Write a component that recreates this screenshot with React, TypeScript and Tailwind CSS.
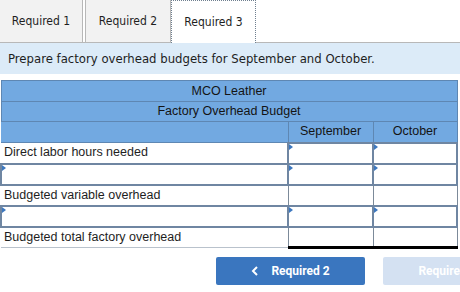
import React from 'react';

const Flag = () => (
  <span className="absolute left-0 top-0 h-0 w-0 border-l-[4px] border-y-[3px] border-l-[#3d78bf] border-y-transparent" />
);

const InputCell = () => (
  <td className="relative h-[21px] border-2 border-[#6f86a2] bg-white p-0">
    <Flag />
  </td>
);

const LabelCell = ({ text }: { text: string }) => (
  <td className="h-[21px] border-y border-[#b9c2cc] bg-white pl-[3px] text-left align-middle">{text}</td>
);

const TotalCell = ({ last = false }: { last?: boolean }) => (
  <td
    className={`h-[21px] border-x border-[#7c8a99] border-t-2 border-t-[#1a1a1a] bg-white p-0 ${
      last ? 'border-b-[3px] border-b-black' : 'border-b border-b-[#7c8a99]'
    }`}
  />
);

export default function App() {
  return (
    <div className="h-[292px] w-[460px] overflow-hidden bg-white text-[#1e1e1e]">
      {/* tabs */}
      <div
        className="flex h-[43px] text-[12px]"
        style={{ fontFamily: '"DejaVu Sans Condensed", "DejaVu Sans", Verdana, sans-serif' }}
      >
        <div className="flex w-[83px] items-center justify-center border-r border-b border-[#b8b8b8] bg-[#f2f2f2]">Required 1</div>
        <div className="w-[2px] border-b border-[#b8b8b8]" />
        <div className="flex w-[86px] items-center justify-center border-x border-b border-[#b8b8b8] bg-[#f2f2f2]">Required 2</div>
        <div className="flex w-[85px] items-center justify-center border-x border-t border-dotted border-[#6f7f8f] bg-white">Required 3</div>
        <div className="flex-1 border-b border-[#b8b8b8]" />
      </div>

      {/* instructions */}
      <div
        className="flex h-[31px] items-center bg-[#dcebf8] pl-[8px] text-[13px] text-[#1e1e1e]"
        style={{ fontFamily: '"DejaVu Sans Condensed", "DejaVu Sans", Verdana, sans-serif' }}
      >
        Prepare factory overhead budgets for September and October.
      </div>

      {/* table */}
      <table
        className="mt-[6px] w-[456px] table-fixed border-collapse text-[12.5px]"
        style={{ fontFamily: '"Liberation Sans", Arial, sans-serif' }}
      >
        <colgroup>
          <col className="w-[287px]" />
          <col className="w-[85px]" />
          <col className="w-[84px]" />
        </colgroup>
        <tbody>
          <tr>
            <td colSpan={3} className="h-[21px] border border-[#5e87b3] bg-[#72a9e1] text-center text-[#141414]">
              MCO Leather
            </td>
          </tr>
          <tr>
            <td colSpan={3} className="h-[20px] border border-[#5e87b3] bg-[#72a9e1] text-center text-[#141414]">
              Factory Overhead Budget
            </td>
          </tr>
          <tr>
            <td className="h-[21px] border-y border-[#5e87b3] bg-[#72a9e1]" />
            <td className="h-[21px] border border-[#5e87b3] bg-[#72a9e1] text-center text-[#141414]">September</td>
            <td className="h-[21px] border border-[#5e87b3] bg-[#72a9e1] text-center text-[#141414]">October</td>
          </tr>
          <tr>
            <LabelCell text="Direct labor hours needed" />
            <InputCell />
            <InputCell />
          </tr>
          <tr>
            <InputCell />
            <InputCell />
            <InputCell />
          </tr>
          <tr>
            <LabelCell text="Budgeted variable overhead" />
            <TotalCell />
            <TotalCell />
          </tr>
          <tr>
            <InputCell />
            <InputCell />
            <InputCell />
          </tr>
          <tr>
            <LabelCell text="Budgeted total factory overhead" />
            <TotalCell last />
            <TotalCell last />
          </tr>
        </tbody>
      </table>

      {/* navigation */}
      <div
        className="mt-[8px] flex gap-[18px] pl-[216px] text-[12px] font-bold text-white"
        style={{ fontFamily: 'Roboto, "Liberation Sans", Arial, sans-serif' }}
      >
        <button className="flex h-[28px] w-[149px] shrink-0 items-center justify-center gap-[12px] rounded-[2px] bg-[#3a76bf]">
          <svg width="8" height="10" viewBox="0 0 8 10" fill="none">
            <path d="M6 1 L2 5 L6 9" stroke="white" strokeWidth="2" />
          </svg>
          <span>Required 2</span>
        </button>
        <button className="flex h-[28px] w-[149px] shrink-0 items-center justify-center gap-[12px] rounded-[2px] bg-[#d4e1f2]">
          <span>Required 3</span>
          <svg width="8" height="10" viewBox="0 0 8 10" fill="none">
            <path d="M2 1 L6 5 L2 9" stroke="white" strokeWidth="2" />
          </svg>
        </button>
      </div>
    </div>
  );
}
